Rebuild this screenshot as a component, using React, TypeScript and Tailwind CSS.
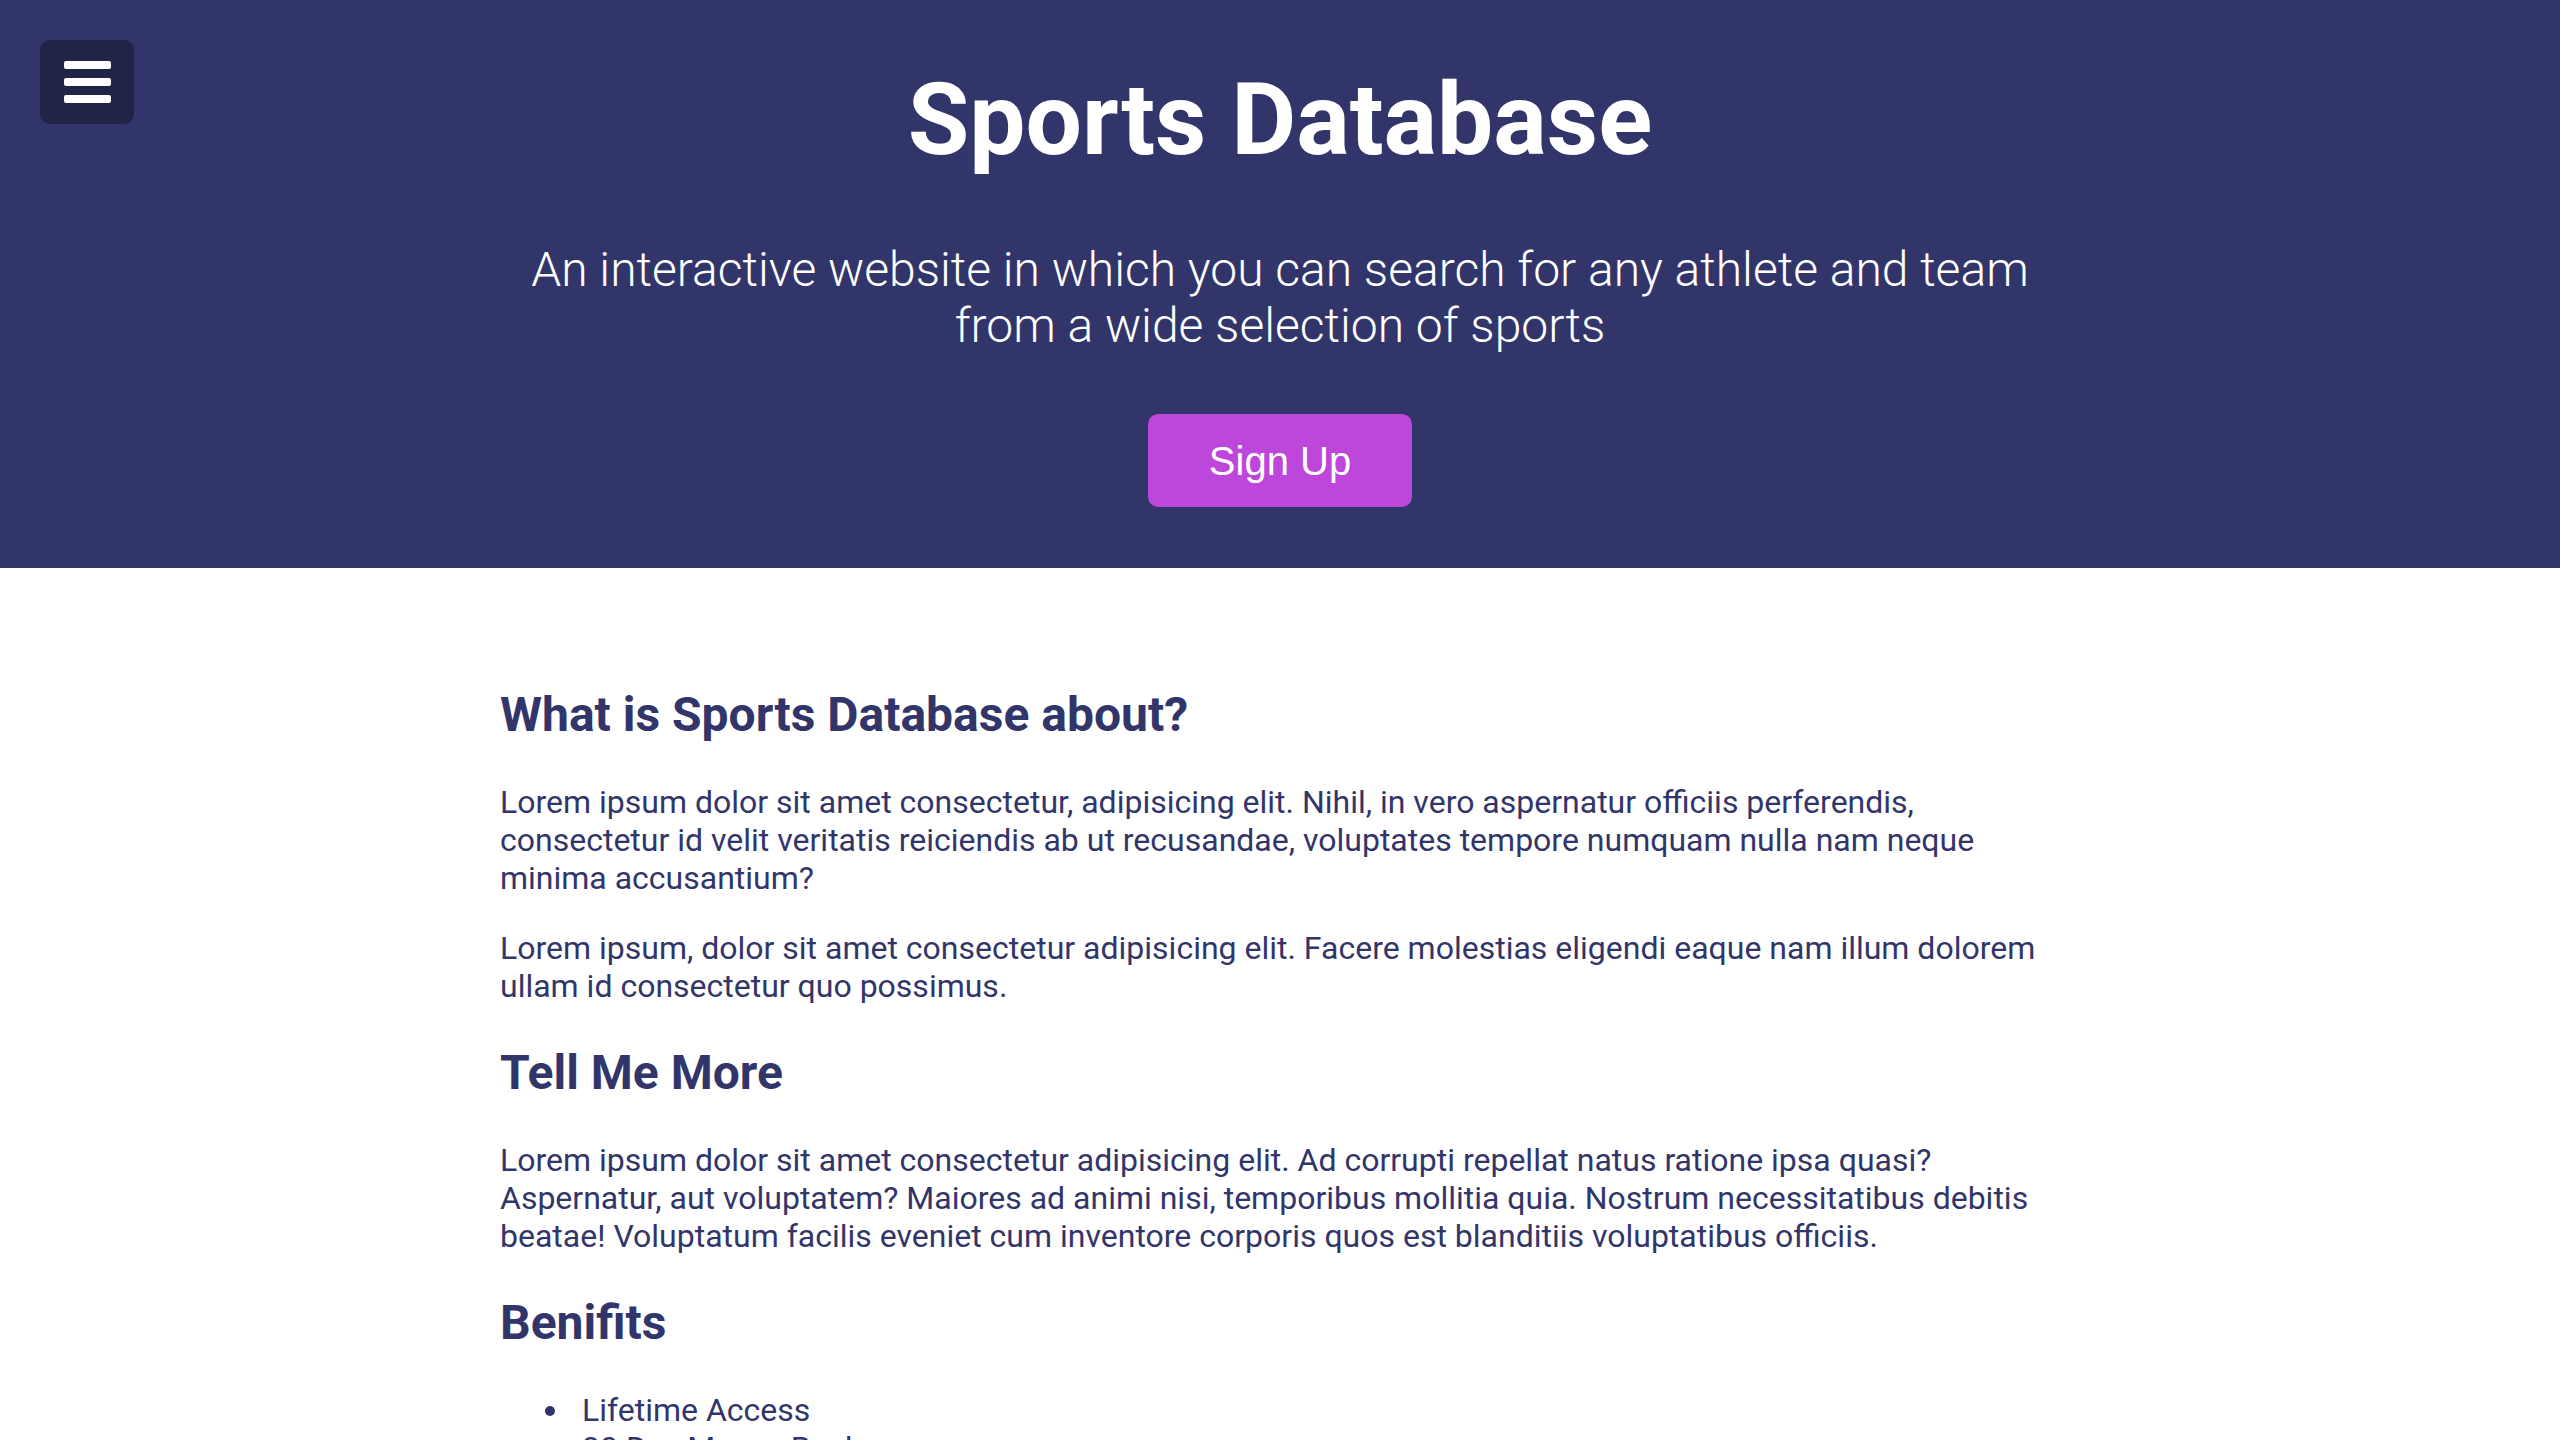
import React from "react";

// Landing page: navy hero + plain content column

function MenuButton() {
  return (
    <button
      aria-label="Open menu"
      className="absolute left-[40px] top-[40px] flex h-[84px] w-[94px] flex-col items-center justify-center gap-[9px] rounded-[10px] bg-[#212347]"
    >
      <span className="block h-[8px] w-[47px] rounded-[2px] bg-white" />
      <span className="block h-[8px] w-[47px] rounded-[2px] bg-white" />
      <span className="block h-[8px] w-[47px] rounded-[2px] bg-white" />
    </button>
  );
}

export default function App() {
  return (
    <div className="min-h-screen bg-white font-['Roboto',sans-serif]">
      {/* Hero */}
      <header className="relative flex flex-col items-center bg-[#32356a] pt-[60px] pb-[61px] text-center text-white">
        <MenuButton />
        <h1 className="text-[100px] font-bold leading-[120px]">Sports Database</h1>
        <p className="mt-[62px] max-w-[1560px] text-[48px] font-light leading-[56px]">
          An interactive website in which you can search for any athlete and team from a wide selection of sports
        </p>
        <button className="mt-[60px] flex h-[93px] w-[264px] items-center justify-center rounded-[10px] bg-[#bd47da] font-['Liberation_Sans',Arial,sans-serif] text-[40px] text-white">
          Sign Up
        </button>
      </header>

      {/* Content */}
      <main className="mx-auto max-w-[1560px] pt-[119px] text-[32px] leading-[38px] text-[#32356a]">
        <h2 className="mb-[40px] text-[48px] font-bold leading-[56px]">What is Sports Database about?</h2>
        <p className="mb-[32px]">
          Lorem ipsum dolor sit amet consectetur, adipisicing elit. Nihil, in vero aspernatur officiis perferendis,
          consectetur id velit veritatis reiciendis ab ut recusandae, voluptates tempore numquam nulla nam neque minima
          accusantium?
        </p>
        <p>
          Lorem ipsum, dolor sit amet consectetur adipisicing elit. Facere molestias eligendi eaque nam illum dolorem
          ullam id consectetur quo possimus.
        </p>

        <h2 className="my-[40px] text-[48px] font-bold leading-[56px]">Tell Me More</h2>
        <p>
          Lorem ipsum dolor sit amet consectetur adipisicing elit. Ad corrupti repellat natus ratione ipsa quasi?
          Aspernatur, aut voluptatem? Maiores ad animi nisi, temporibus mollitia quia. Nostrum necessitatibus debitis
          beatae! Voluptatum facilis eveniet cum inventore corporis quos est blanditiis voluptatibus officiis.
        </p>

        <h2 className="my-[40px] text-[48px] font-bold leading-[56px]">Benifits</h2>
        <ul className="list-disc pl-[72px] pb-[32px]">
          <li className="pl-[10px]">Lifetime Access</li>
          <li className="pl-[10px]">30 Day Money Back</li>
          <li className="pl-[10px]">Access to Every Sport</li>
        </ul>
      </main>
    </div>
  );
}
